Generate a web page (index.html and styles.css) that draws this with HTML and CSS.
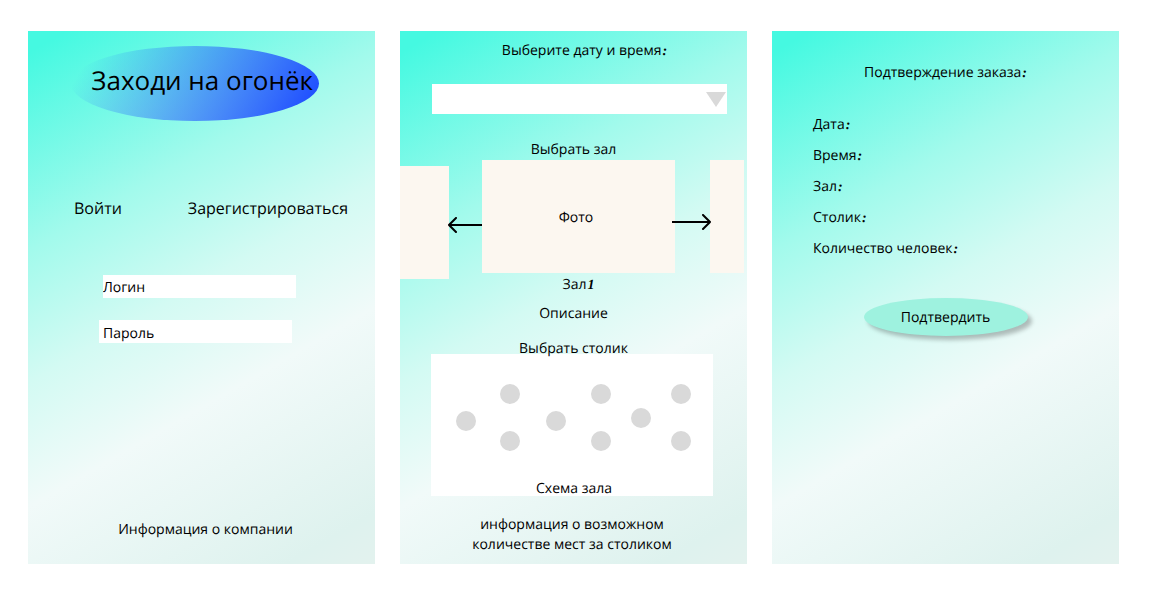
FILE: index.html
```html
<!DOCTYPE html>
<html lang="ru">
<head>
<meta charset="utf-8">
<meta name="viewport" content="width=device-width, initial-scale=1">
<title>Заходи на огонёк</title>
<link rel="stylesheet" href="styles.css">
</head>
<body>
<main class="screens">
  <section class="screen login">
    <h1 class="logo">Заходи на огонёк</h1>
    <nav class="auth">
      <a class="auth-link" href="#login">Войти</a>
      <a class="auth-link" href="#register">Зарегистрироваться</a>
    </nav>
    <form class="login-form" id="login">
      <input class="field" type="text" placeholder="Логин" aria-label="Логин">
      <input class="field field-password" type="password" placeholder="Пароль" aria-label="Пароль">
    </form>
    <a class="company" href="#company">Информация о компании</a>
  </section>

  <section class="screen booking">
    <label class="date-label" for="date">Выберите дату и время<span class="script">:</span></label>
    <div class="date-box">
      <select class="date-select" id="date"><option></option></select>
      <svg class="date-arrow" viewBox="0 0 20 15" width="20" height="15" aria-hidden="true"><path d="M0 0H20L10 15Z" fill="#d9d9d9"/></svg>
    </div>
    <h2 class="heading hall-heading">Выбрать зал</h2>
    <div class="carousel">
      <div class="slide slide-prev"></div>
      <button class="arrow arrow-prev" type="button" aria-label="Предыдущий зал">
        <svg viewBox="0 0 34 16" width="34" height="16"><path d="M34 8H1M8 1L1 8L8 15" fill="none" stroke="#000" stroke-width="2" stroke-linecap="round"/></svg>
      </button>
      <div class="slide slide-current">Фото</div>
      <button class="arrow arrow-next" type="button" aria-label="Следующий зал">
        <svg viewBox="0 0 39 16" width="39" height="16"><path d="M0 8H38M31 1L38 8L31 15" fill="none" stroke="#000" stroke-width="2" stroke-linecap="round"/></svg>
      </button>
      <div class="slide slide-next"></div>
    </div>
    <p class="hall-name">Зал<span class="script">1</span></p>
    <p class="hall-text">Описание</p>
    <h2 class="heading table-heading">Выбрать столик</h2>
    <div class="plan">
      <button class="seat seat-1" type="button" aria-label="Столик 1"></button>
      <button class="seat seat-2" type="button" aria-label="Столик 2"></button>
      <button class="seat seat-3" type="button" aria-label="Столик 3"></button>
      <button class="seat seat-4" type="button" aria-label="Столик 4"></button>
      <button class="seat seat-5" type="button" aria-label="Столик 5"></button>
      <button class="seat seat-6" type="button" aria-label="Столик 6"></button>
      <button class="seat seat-7" type="button" aria-label="Столик 7"></button>
      <button class="seat seat-8" type="button" aria-label="Столик 8"></button>
      <button class="seat seat-9" type="button" aria-label="Столик 9"></button>
      <p class="plan-name">Схема зала</p>
    </div>
    <p class="seats-info">информация о возможном<br>количестве мест за столиком</p>
  </section>

  <section class="screen confirm">
    <h2 class="heading">Подтверждение заказа<span class="script">:</span></h2>
    <ul class="order">
      <li>Дата<span class="script">:</span></li>
      <li>Время<span class="script">:</span></li>
      <li>Зал<span class="script">:</span></li>
      <li>Столик<span class="script">:</span></li>
      <li>Количество человек<span class="script">:</span></li>
    </ul>
    <button class="submit" type="button">Подтвердить</button>
  </section>
</main>
</body>
</html>
```

FILE: styles.css
```css
* {
  box-sizing: border-box;
}

body {
  margin: 0;
  background: #fff;
  color: #000;
  font: 14px/20px "Open Sans", "Noto Sans", sans-serif;
  text-rendering: geometricPrecision;
}

h1, h2, p, ul {
  margin: 0;
  padding: 0;
  font-weight: 400;
}

a {
  color: inherit;
  text-decoration: none;
}

button, input, select {
  margin: 0;
  border: 0;
  border-radius: 0;
  padding: 0;
  color: inherit;
  font: inherit;
  text-rendering: inherit;
}

button {
  cursor: pointer;
}

.screens {
  display: grid;
  grid-template-columns: repeat(3, 1fr);
  gap: 25px;
  padding: 31px 49px 31px 28px;
}

.screen {
  display: flex;
  flex-direction: column;
  background: linear-gradient(150deg, #45f9e1 3%, #a2faec 30%, #d3faf3 48%, #f1faf9 65%, #def2ee 93%, #e3f2ee 100%);
}

.heading {
  font-size: 14px;
  text-align: center;
}

.script {
  padding-left: 1px;
  font-family: "Liberation Serif", serif;
  font-style: italic;
  font-weight: 700;
  line-height: 1px;
}

/* Login */

.login {
  padding-top: 15px;
}

.logo {
  display: flex;
  align-items: center;
  justify-content: flex-end;
  width: 248px;
  height: 75px;
  margin-left: 43px;
  padding: 0 6px 8px 0;
  border-radius: 50%;
  background: linear-gradient(120deg, rgba(31, 79, 255, 0) 8%, #1f4fff 94%);
  font-size: 26px;
  line-height: 36px;
  white-space: nowrap;
}

.auth {
  display: flex;
  justify-content: space-between;
  margin-top: 75px;
  padding: 0 27px 0 46px;
  font-size: 16px;
  line-height: 24px;
}

.login-form {
  display: flex;
  flex-direction: column;
  gap: 22px;
  margin-top: 55px;
  padding-left: 71px;
}

.field {
  width: 193px;
  height: 23px;
  margin-left: 4px;
  padding-top: 2px;
  background: #fff;
}

.field-password {
  margin-left: 0;
  padding: 3px 0 0 4px;
}

.field::placeholder {
  color: #000;
  opacity: 1;
}

.company {
  margin-top: auto;
  padding: 0 0 24px 8px;
  text-align: center;
}

/* Booking */

.booking {
  padding-top: 10px;
}

.date-label {
  padding-left: 22px;
  text-align: center;
}

.date-box {
  position: relative;
  margin: 23px 20px 0 32px;
}

.date-select {
  display: block;
  width: 100%;
  height: 30px;
  background: #fff;
  appearance: none;
}

.date-arrow {
  position: absolute;
  top: 8px;
  right: 1px;
  pointer-events: none;
}

.hall-heading {
  margin-top: 26px;
}

.carousel {
  display: flex;
  align-items: flex-start;
  margin: 0 3px -5px 0;
}

.slide {
  height: 113px;
  background: #fcf7f0;
}

.slide-prev {
  width: 49px;
  margin-top: 6px;
}

.slide-current {
  flex: 1;
  padding: 48px 5px 0 0;
  text-align: center;
}

.slide-next {
  width: 34px;
}

.arrow {
  z-index: 1;
  background: none;
}

.arrow svg {
  display: block;
}

.arrow-prev {
  margin: 57px 0 0 -1px;
}

.arrow-next {
  margin: 54px -1px 0 -3px;
}

.hall-name {
  margin-top: 1px;
  padding-left: 10px;
  text-align: center;
}

.hall-text {
  margin-top: 9px;
  text-align: center;
}

.table-heading {
  z-index: 1;
  margin-top: 15px;
}

.plan {
  position: relative;
  display: flex;
  align-items: flex-end;
  justify-content: center;
  height: 142px;
  margin: -5px 34px 0 31px;
  background: #fff;
}

.plan-name {
  padding-left: 4px;
  line-height: 14px;
}

.seat {
  position: absolute;
  width: 20px;
  height: 20px;
  border-radius: 50%;
  background: #d9d9d9;
}

.seat-1 { left: 25px; top: 57px; }
.seat-2 { left: 69px; top: 30px; }
.seat-3 { left: 69px; top: 77px; }
.seat-4 { left: 115px; top: 57px; }
.seat-5 { left: 160px; top: 30px; }
.seat-6 { left: 160px; top: 77px; }
.seat-7 { left: 200px; top: 54px; }
.seat-8 { left: 240px; top: 30px; }
.seat-9 { left: 240px; top: 77px; }

.seats-info {
  margin-top: 19px;
  padding: 0 3px 9px 0;
  text-align: center;
}

/* Confirmation */

.confirm {
  padding-top: 32px;
}

.order {
  display: grid;
  gap: 11px;
  margin: 32px 0 0 41px;
  list-style: none;
}

.submit {
  align-self: center;
  width: 164px;
  height: 38px;
  margin-top: 39px;
  padding-top: 2px;
  border-radius: 50%;
  background: #9ef2df;
  box-shadow: 4px 4px 4px rgba(0, 0, 0, 0.25);
}
```
